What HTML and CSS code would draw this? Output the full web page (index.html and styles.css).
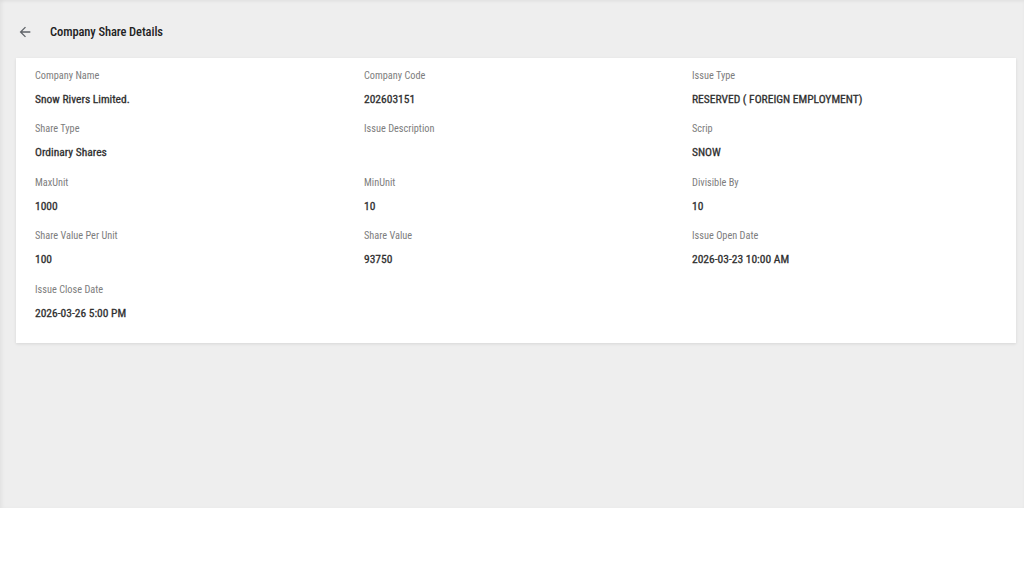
FILE: index.html
```html
<!DOCTYPE html>
<html lang="en">
<head>
<meta charset="utf-8">
<title>Company Share Details</title>
<link rel="stylesheet" href="styles.css">
</head>
<body>
<div class="page">
  <header class="header">
    <button class="back" aria-label="Back">
      <svg viewBox="0 0 24 24" width="16" height="16"><path d="M20 11H7.83l5.59-5.59L12 4l-8 8 8 8 1.41-1.41L7.83 13H20v-2z" fill="#5f6368"/></svg>
    </button>
    <h1 class="title">Company Share Details</h1>
  </header>
  <section class="card">
    <div class="grid">
      <div class="cell"><div class="label">Company Name</div><div class="value">Snow Rivers Limited.</div></div>
      <div class="cell"><div class="label">Company Code</div><div class="value">202603151</div></div>
      <div class="cell"><div class="label">Issue Type</div><div class="value">RESERVED ( FOREIGN EMPLOYMENT)</div></div>
      <div class="cell"><div class="label">Share Type</div><div class="value">Ordinary Shares</div></div>
      <div class="cell"><div class="label">Issue Description</div><div class="value"></div></div>
      <div class="cell"><div class="label">Scrip</div><div class="value">SNOW</div></div>
      <div class="cell"><div class="label">MaxUnit</div><div class="value">1000</div></div>
      <div class="cell"><div class="label">MinUnit</div><div class="value">10</div></div>
      <div class="cell"><div class="label">Divisible By</div><div class="value">10</div></div>
      <div class="cell"><div class="label">Share Value Per Unit</div><div class="value">100</div></div>
      <div class="cell"><div class="label">Share Value</div><div class="value">93750</div></div>
      <div class="cell"><div class="label">Issue Open Date</div><div class="value">2026-03-23 10:00 AM</div></div>
      <div class="cell"><div class="label">Issue Close Date</div><div class="value">2026-03-26 5:00 PM</div></div>
    </div>
  </section>
</div>
</body>
</html>
```

FILE: styles.css
```css
html, body {
  margin: 0;
  padding: 0;
  background: #ffffff;
}
body {
  font-family: "Roboto Condensed", Roboto, "Liberation Sans Narrow", "Noto Sans", sans-serif;
  font-stretch: 80%;
}
.page {
  height: 508px;
  background: #eeeeee;
  padding: 0 8px 0 16px;
  box-sizing: border-box;
  box-shadow: inset 0 2px 3px rgba(0,0,0,0.04), inset 3px 0 3px rgba(0,0,0,0.03);
}
.header {
  display: flex;
  align-items: center;
  height: 24px;
  padding-top: 20px;
  margin-bottom: 14px;
}
.back {
  border: 0;
  background: none;
  padding: 0;
  margin: 0 0 0 1px;
  width: 16px;
  height: 16px;
  display: flex;
  align-items: center;
  justify-content: center;
  cursor: pointer;
}
.title {
  margin: 0 0 0 17px;
  font-size: 12.5px;
  font-weight: 500;
  color: #222222;
  line-height: 24px;
  letter-spacing: -0.1px;
}
.card {
  background: #ffffff;
  box-shadow: 0 1px 3px rgba(0,0,0,0.10);
  padding: 10.5px 0 23.5px 19px;
}
.grid {
  display: grid;
  grid-template-columns: 329px 328px 1fr;
  row-gap: 16.5px;
}
.label {
  font-size: 10.3px;
  line-height: 14px;
  color: #7d7d7d;
  margin-bottom: 9px;
}
.value {
  font-size: 11.5px;
  line-height: 14px;
  font-weight: 400;
  color: #2e2e2e;
  min-height: 14px;
  -webkit-text-stroke: 0.3px #2e2e2e;
}
```
